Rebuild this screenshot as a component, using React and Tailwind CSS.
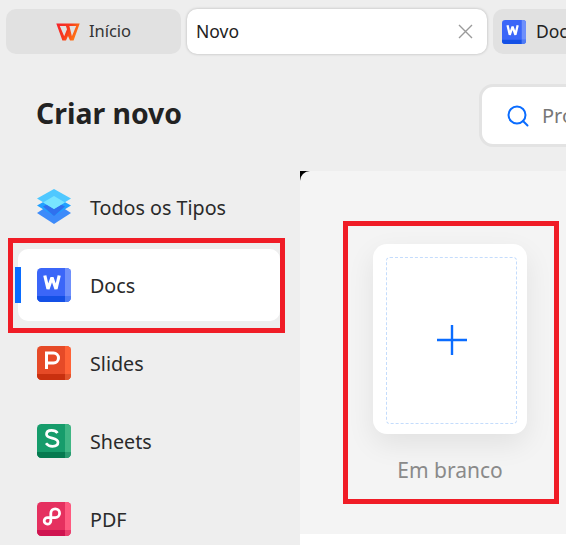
const FONT = "font-['Noto_Sans','Open_Sans',sans-serif]";

function WpsLogo() {
  return (
    <svg width="24" height="18" viewBox="0 0 24 18" fill="none">
      <defs>
        <linearGradient id="wg" x1="0" y1="0" x2="1" y2="0.4">
          <stop offset="0" stopColor="#f5222d" />
          <stop offset="0.55" stopColor="#f83a1c" />
          <stop offset="1" stopColor="#ff7a14" />
        </linearGradient>
      </defs>
      <path
        fillRule="evenodd"
        clipRule="evenodd"
        d="M0.3 0.5H23.7L17.6 17.5H14L12 13L10 17.5H6.4ZM3.8 2.9L8.2 13.2L11 6.2L9.9 2.9ZM13.4 2.9L15.9 13.2L20.2 2.9Z"
        fill="url(#wg)"
      />
    </svg>
  );
}

function AppIcon({ size = 34, main, side, bottom, corner, children }) {
  return (
    <svg width={size} height={size} viewBox="0 0 34 34">
      <defs>
        <clipPath id={`clip-${main}-${size}`}>
          <rect width="34" height="34" rx="4.5" />
        </clipPath>
      </defs>
      <g clipPath={`url(#clip-${main}-${size})`}>
        <rect width="34" height="34" fill={main} />
        <rect x="28" width="6" height="28" fill={side} />
        <rect y="28" width="28" height="6" fill={bottom} />
        <rect x="28" y="28" width="6" height="6" fill={corner} />
        {children}
      </g>
    </svg>
  );
}

function DocsIcon({ size }) {
  return (
    <AppIcon size={size} main="#3b66f8" side="#6f90fb" bottom="#1450e6" corner="#4f7cf5">
      <path d="M7.8 7.5L11 21L15 9.5L19 21L22.2 7.5" fill="none" stroke="#fff" strokeWidth="3.2" strokeLinejoin="bevel" />
    </AppIcon>
  );
}

function SlidesIcon() {
  return (
    <AppIcon main="#e64a27" side="#ff6236" bottom="#c9300f" corner="#e2542c">
      <path d="M9.5 23V7H16.5A5 5 0 0 1 16.5 17H9.5" fill="none" stroke="#fff" strokeWidth="3" />
    </AppIcon>
  );
}

function SheetsIcon() {
  return (
    <AppIcon main="#169c6b" side="#3fb684" bottom="#067a50" corner="#2a9b70">
      <path d="M20.5 9C19 6.8 16.8 6.3 14.5 6.3C11.5 6.3 9.5 7.8 9.5 10.2C9.5 15.5 21 12.8 21 18.3C21 21 18.6 22.4 15.5 22.4C12.8 22.4 10.6 21.4 9 19.3" fill="none" stroke="#fff" strokeWidth="2.7" />
    </AppIcon>
  );
}

function PdfIcon() {
  return (
    <AppIcon main="#e5305f" side="#ff5a80" bottom="#cf1450" corner="#ea3f6e">
      <path d="M13.8 19V11.2A4.4 4.4 0 1 1 18.2 15.6H10.6A3.3 3.3 0 1 0 13.8 19" fill="none" stroke="#fff" strokeWidth="2.8" />
    </AppIcon>
  );
}

function LayersIcon() {
  return (
    <svg width="34" height="36" viewBox="0 0 34 36">
      <path d="M17 13L34 24L17 35L0 24Z" fill="#3d8bfa" />
      <path d="M17 7L34 16.5L17 27L0 16.5Z" fill="#22a0ff" />
      <path d="M17 12L28 17.5L17 27L6 17.5Z" fill="#2f70ee" />
      <path d="M17 0L34 9.5L17 20L0 9.5Z" fill="#4fc8ff" />
      <path d="M17 7L28 13.5L17 20L6 13.5Z" fill="#78e4ff" />
    </svg>
  );
}

function Row({ icon, label, active }) {
  return (
    <div
      className={`relative flex items-center h-[72px] mb-[6px] ml-[18px] w-[262px] pl-[19px] gap-[19px] rounded-[10px] ${
        active ? "bg-white" : ""
      }`}
    >
      {active && <div className="absolute left-[-3px] top-[18px] h-[36px] w-[6px] bg-[#0a6cff]" />}
      <div className="w-[34px] h-[34px] flex items-center justify-center shrink-0">{icon}</div>
      <span className="pt-[2px] text-[19.7px] leading-none text-[#2a2a2a]">{label}</span>
    </div>
  );
}

export default function App() {
  return (
    <div className={`relative w-[566px] h-[545px] overflow-hidden bg-[#eeeeee] ${FONT}`}>
      {/* tabs */}
      <div className="flex gap-[6px] pt-[9px] pl-[6px] h-[54px]">
        <div className="w-[175px] h-[45px] shrink-0 rounded-[10px] bg-[#e1e1e1] flex items-center justify-center gap-[9px]">
          <WpsLogo />
          <span className="text-[16.5px] text-[#333333]">Início</span>
        </div>
        <div className="w-[300px] h-[45px] shrink-0 rounded-[10px] bg-white shadow-[0_0_3px_rgba(0,0,0,0.25)] flex items-center justify-between pl-[9px] pr-[14px]">
          <span className="text-[17.5px] text-[#222222]">Novo</span>
          <svg width="15" height="15" viewBox="0 0 15 15" stroke="#9a9a9a" strokeWidth="1.4" fill="none">
            <path d="M1 1L14 14M14 1L1 14" />
          </svg>
        </div>
        <div className="w-[200px] h-[45px] shrink-0 rounded-[10px] bg-[#e1e1e1] flex items-center gap-[10px] pl-[9px]">
          <DocsIcon size={24} />
          <span className="text-[17.5px] text-[#222222]">Docs</span>
        </div>
      </div>

      {/* heading row */}
      <div className="h-[117px]">
        <h1 className="ml-[36px] pt-[40px] text-[28.4px] leading-[38px] font-bold text-[#222222]">Criar novo</h1>
        <div className="absolute left-[479px] top-[84px] w-[300px] h-[63px] rounded-[14px] border-[3px] border-[#e3e3e3] bg-white flex items-center pl-[25px] gap-[13px]">
          <svg width="22" height="22" viewBox="0 0 22 22" fill="none" stroke="#0a6cff" strokeWidth="2" className="shrink-0">
            <circle cx="10" cy="10" r="8.5" />
            <path d="M16 16L20.5 20.5" strokeLinecap="round" />
          </svg>
          <span className="text-[20px] text-[#777777]">Procurar</span>
        </div>
      </div>

      {/* body */}
      <div className="flex">
        <div className="w-[300px] shrink-0">
          <Row icon={<LayersIcon />} label="Todos os Tipos" />
          <Row icon={<DocsIcon size={34} />} label="Docs" active />
          <Row icon={<SlidesIcon />} label="Slides" />
          <Row icon={<SheetsIcon />} label="Sheets" />
          <Row icon={<PdfIcon />} label="PDF" />
        </div>
        <div className="flex-1 flex flex-col h-[375px] bg-white">
          <div className="h-[363px] bg-black">
            <div className="h-full rounded-tl-[10px] bg-[#f4f4f4] pt-[73px] pl-[73px]">
              <div className="w-[154px] h-[190px] rounded-[14px] bg-white shadow-[0_10px_28px_rgba(0,0,0,0.08)] pt-[13px] pl-[13px] pr-[10px] pb-[10px]">
                <div className="h-full rounded-[4px] border border-dashed border-[#c4dcfc] flex items-center justify-center pb-[2px]">
                  <svg width="30" height="30" viewBox="0 0 30 30" stroke="#0a6cff" strokeWidth="2.4" strokeLinecap="round">
                    <path d="M15 0.5V29.5M0.5 15H29.5" />
                  </svg>
                </div>
              </div>
              <div className="w-[154px] mt-[22px] text-center text-[21px] leading-[28px] text-[#8a8a8a]">Em branco</div>
            </div>
          </div>
        </div>
      </div>

      {/* red annotation frames */}
      <div className="absolute left-[8px] top-[238px] w-[277px] h-[95px] border-[5px] border-[#f01c26]" />
      <div className="absolute left-[343px] top-[221px] w-[216px] h-[283px] border-[5px] border-[#f01c26]" />
    </div>
  );
}
